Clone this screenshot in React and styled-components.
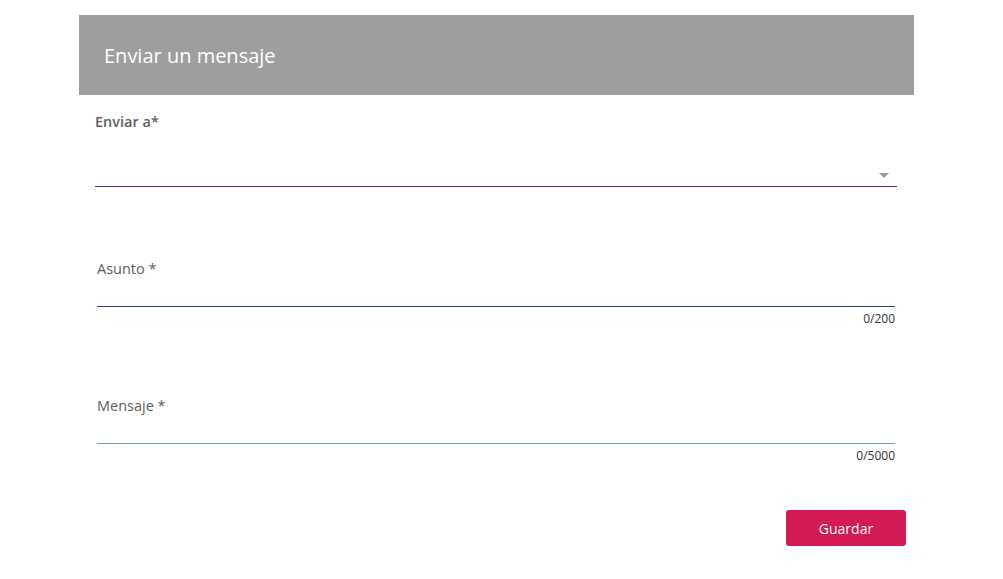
import React from 'react'
import styled, { createGlobalStyle } from 'styled-components'

const GlobalStyle = createGlobalStyle`
  body {
    margin: 0;
    background: #fff;
    font-family: "Open Sans", "Noto Sans", sans-serif;
  }
`

const Panel = styled.div`
  width: 835px;
  margin: 15px 0 0 79px;
  background: #fff;
`

const Header = styled.div`
  height: 80px;
  background: #9e9e9e;
  display: flex;
  align-items: center;
  padding-left: 25px;
  h2 {
    margin: 0;
    font-size: 20px;
    font-weight: 400;
    color: #fff;
  }
`

const Body = styled.div`
  padding: 17px 17px 0 16px;
  display: flex;
  flex-direction: column;
`

const Label = styled.label`
  display: block;
  font-size: 14.5px;
  line-height: 20px;
  color: #5f5f5f;
  font-weight: ${p => (p.$strong ? 600 : 500)};
`

const SelectBox = styled.div`
  position: relative;
  height: 54px;
  border-bottom: 1px solid #2b3a9f;
`

const Arrow = styled.span`
  position: absolute;
  right: 8px;
  bottom: 8px;
  width: 0;
  height: 0;
  border-left: 5px solid transparent;
  border-right: 5px solid transparent;
  border-top: 5px solid #9a9a9a;
`

const Field = styled.div`
  margin: ${p => p.$top}px 2px 0 2px;
`

const Input = styled.input`
  display: block;
  width: 100%;
  box-sizing: border-box;
  height: 28px;
  border: none;
  border-bottom: 1px solid ${p => p.$line};
  outline: none;
  background: transparent;
  font-family: inherit;
  font-size: 14px;
  padding: 0;
`

const Counter = styled.div`
  text-align: right;
  font-size: 12px;
  line-height: 14px;
  color: #333;
  margin-top: 5px;
`

const Actions = styled.div`
  display: flex;
  justify-content: flex-end;
  margin: 47px -9px 0 0;
`

const Button = styled.button`
  width: 120px;
  height: 36px;
  border: none;
  border-radius: 3px;
  background: #d31a55;
  color: #fff;
  font-family: inherit;
  font-size: 14px;
  cursor: pointer;
`

export default function App() {
  return (
    <>
      <GlobalStyle />
      <Panel>
        <Header>
          <h2>Enviar un mensaje</h2>
        </Header>
        <Body>
          <div>
            <Label $strong>Enviar a*</Label>
            <SelectBox>
              <Arrow />
            </SelectBox>
          </div>
          <Field $top={72}>
            <Label>Asunto *</Label>
            <Input $line="#2b3a9f" />
            <Counter>0/200</Counter>
          </Field>
          <Field $top={70}>
            <Label>Mensaje *</Label>
            <Input $line="#7097c9" />
            <Counter>0/5000</Counter>
          </Field>
          <Actions>
            <Button>Guardar</Button>
          </Actions>
        </Body>
      </Panel>
    </>
  )
}
